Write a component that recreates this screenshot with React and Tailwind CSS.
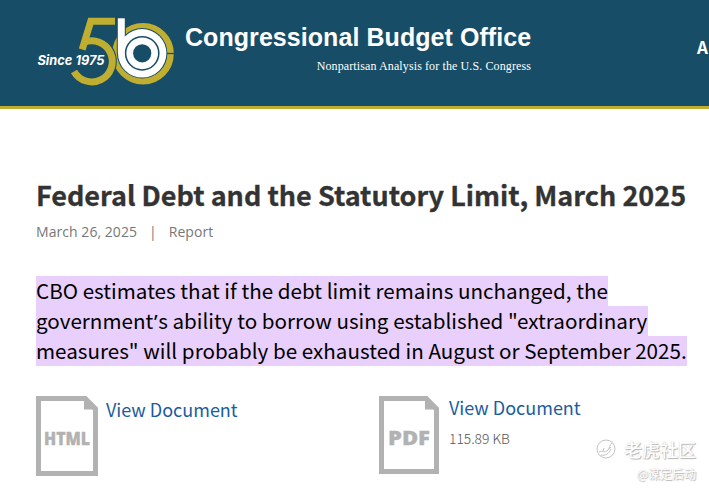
import React from 'react';

const SANS = "font-['Noto_Sans_CJK_SC',sans-serif]";

// Anniversary logo: gold "5" and ring, white "b" with concentric circles
const AnniversaryLogo = () => (
  <svg width="144" height="74" viewBox="34 15 144 74" className="block shrink-0">
    <circle cx="143" cy="53.7" r="27.4" fill="none" stroke="#c0ae30" strokeWidth="6.8" />
    <path d="M166 53.5 H175" stroke="#174d66" strokeWidth="1.3" />
    <path
      d="M84 42.4 A20.5 20.5 0 1 1 74 71.5"
      fill="none"
      stroke="#174d66"
      strokeWidth="9"
    />
    <path
      d="M84 42.4 A20.5 20.5 0 1 1 74 71.5"
      fill="none"
      stroke="#c0ae30"
      strokeWidth="7"
    />
    <path d="M115 21.3 H90.8 L82.2 49.5" fill="none" stroke="#c0ae30" strokeWidth="7" />
    <path d="M116.8 15 H125.8 V53 H116.8 Z" fill="#174d66" />
    <circle cx="142.2" cy="53.3" r="25.2" fill="#174d66" />
    <circle cx="142.2" cy="53.3" r="24.2" fill="#fff" />
    <path d="M117.8 18.3 H124.8 V53 H117.8 Z" fill="#fff" />
    <circle cx="142.2" cy="53.3" r="16.6" fill="none" stroke="#174d66" strokeWidth="1.5" />
    <circle cx="142.2" cy="53.3" r="9.1" fill="#174d66" />
    <text
      x="37.5"
      y="64.8"
      textLength="67"
      lengthAdjust="spacingAndGlyphs"
      stroke="#174d66"
      strokeWidth="2"
      paintOrder="stroke"
      className="fill-white font-['Inter',sans-serif] text-[13px] font-bold italic"
    >
      Since 1975
    </text>
  </svg>
);

const FileIcon = ({ label, width, height, textX, textY, textWidth, size }) => (
  <svg width={width} height={height} viewBox={`0 0 ${width} ${height}`} className="block shrink-0">
    <path
      d={`M2.5 2.5 H${width - 13} L${width - 2.5} 13 V${height - 2.5} H2.5 Z`}
      fill="#fff"
      stroke="#b2b2b2"
      strokeWidth="5"
    />
    <path d={`M${width - 14} 0 H${width - 12} L${width} 12 V13.5 H${width - 14} Z`} fill="#b2b2b2" />
    <text
      x={textX}
      y={textY}
      textLength={textWidth}
      lengthAdjust="spacingAndGlyphs"
      fill="#b2b2b2"
      stroke="#b2b2b2"
      strokeWidth="0.3"
      fontSize={size}
      className="font-['Open_Sans',sans-serif] font-extrabold"
    >
      {label}
    </text>
  </svg>
);

const Watermark = () => (
  <div className="absolute top-[436px] right-[13px] flex flex-col items-end font-['Noto_Sans_CJK_SC',sans-serif] text-white [text-shadow:1px_1px_1px_#b4b4b4,0_0_1px_#c4c4c4]">
    <div className="flex items-center gap-2">
      <svg width="20" height="20" viewBox="0 0 20 20" fill="none" stroke="#c3c3c3" strokeWidth="1">
        <circle cx="10" cy="10" r="9" />
        <path d="M3 13 C7 11 8 15 12 11 C14 9 13 6 16 4 M5 16 C9 17 13 15 15 10 M7 12 L8 9 M12 11 L15 8" />
      </svg>
      <span className="text-[18px] leading-[26px] font-medium">老虎社区</span>
    </div>
    <span className="text-[12px] leading-[24px]">@谋定后动</span>
  </div>
);

export default function App() {
  return (
    <div className={`relative h-[490px] w-[709px] overflow-hidden bg-white ${SANS}`}>
      <header className="flex h-[109px] items-start border-b-[3px] border-[#bfae30] bg-[#174d66] pl-[34px]">
        <div className="pt-[15px]">
          <AnniversaryLogo />
        </div>
        <div className="ml-[7px] w-[346px] pt-[22px] text-white">
          <div className="text-[25px] leading-[30px] font-bold tracking-[0.06px] whitespace-nowrap font-['Liberation_Sans',sans-serif]">
            Congressional Budget Office
          </div>
          <div className="mt-[5px] text-right text-[12px] leading-[18px] tracking-[0.11px] whitespace-nowrap font-['Liberation_Serif',serif]">
            Nonpartisan Analysis for the U.S. Congress
          </div>
        </div>
        <nav className="ml-[166px] pt-[35px] text-[17px] leading-6 font-bold whitespace-nowrap text-white">
          A
        </nav>
      </header>

      <main className="px-9 pt-[66px]">
        <h1 className="text-[27px] leading-10 font-bold whitespace-nowrap text-[#333] [-webkit-text-stroke:0.3px_#333]">
          Federal Debt and the Statutory Limit, March 2025
        </h1>
        <div className="mt-[5px] flex text-[14px] leading-6 tracking-[0.05px] whitespace-nowrap text-[#777] font-['Open_Sans',sans-serif]">
          <span>March 26, 2025</span>
          <span className="mx-[12px]">|</span>
          <span>Report</span>
        </div>

        {/* Highlighted summary */}
        <div className="mt-8 text-[20.6px] leading-[28px] tracking-[0.02px] whitespace-nowrap text-black">
          <p className="h-[30px] w-[572px] bg-[#e8cffc]">
            CBO estimates that if the debt limit remains unchanged, the
          </p>
          <p className="h-[30px] w-[612px] bg-[#e8cffc]">
            government<span className="px-[0.6px] font-['Noto_Sans',sans-serif]">’</span>s ability to borrow using established "extraordinary
          </p>
          <p className="h-[30px] w-[651px] bg-[#e8cffc]">
            measures" will probably be exhausted in August or September 2025.
          </p>
        </div>

        <div className="mt-[30px] flex">
          <div className="flex w-[343px] gap-2">
            <FileIcon label="HTML" width={62} height={80} textX={8} textY={49} textWidth={46} size={17} />
            <a href="#" className="-mt-px text-[18px] leading-7 text-[#1a5ca0]">View Document</a>
          </div>
          <div className="flex gap-[10px]">
            <FileIcon label="PDF" width={60} height={78} textX={9} textY={49} textWidth={42} size={20} />
            <div className="-mt-[3px]">
              <a href="#" className="block text-[18px] leading-7 text-[#1a5ca0]">View Document</a>
              <span className="mt-[5px] block text-[13.8px] leading-6 font-light text-[#555]">115.89 KB</span>
            </div>
          </div>
        </div>
      </main>

      <Watermark />
    </div>
  );
}
